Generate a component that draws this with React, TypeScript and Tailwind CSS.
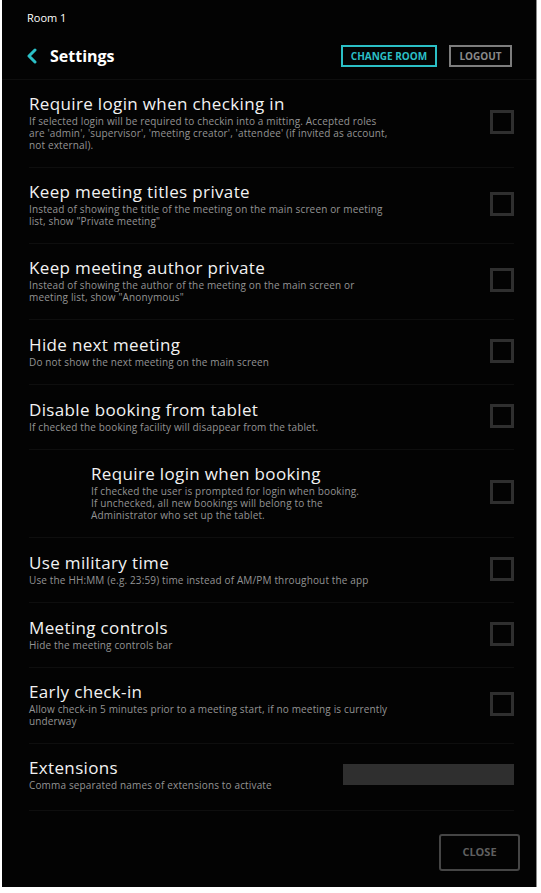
import React from "react";

type Setting = {
  title: string;
  lines: string[];
  indent?: boolean;
};

const settings: Setting[] = [
  {
    title: "Require login when checking in",
    lines: [
      "If selected login will be required to checkin into a mitting. Accepted roles",
      "are 'admin', 'supervisor', 'meeting creator', 'attendee' (if invited as account,",
      "not external).",
    ],
  },
  {
    title: "Keep meeting titles private",
    lines: [
      "Instead of showing the title of the meeting on the main screen or meeting",
      'list, show "Private meeting"',
    ],
  },
  {
    title: "Keep meeting author private",
    lines: [
      "Instead of showing the author of the meeting on the main screen or",
      'meeting list, show "Anonymous"',
    ],
  },
  {
    title: "Hide next meeting",
    lines: ["Do not show the next meeting on the main screen"],
  },
  {
    title: "Disable booking from tablet",
    lines: ["If checked the booking facility will disappear from the tablet."],
  },
  {
    title: "Require login when booking",
    indent: true,
    lines: [
      "If checked the user is prompted for login when booking.",
      "If unchecked, all new bookings will belong to the",
      "Administrator who set up the tablet.",
    ],
  },
  {
    title: "Use military time",
    lines: ["Use the HH:MM (e.g. 23:59) time instead of AM/PM throughout the app"],
  },
  {
    title: "Meeting controls",
    lines: ["Hide the meeting controls bar"],
  },
  {
    title: "Early check-in",
    lines: [
      "Allow check-in 5 minutes prior to a meeting start, if no meeting is currently",
      "underway",
    ],
  },
];

function SettingRow({ s }: { s: Setting }) {
  return (
    <div className="min-h-[65px] flex items-center justify-between pt-[13px] pb-[16px] border-b border-[#0e0e0e]">
      <div className={s.indent ? "pl-[62px]" : ""}>
        <div className="text-[17px] leading-[22px] tracking-[0.35px] text-[#f2f2f2]">{s.title}</div>
        <p className="text-[10px] leading-[12px] tracking-[0.15px] text-[#949494] whitespace-nowrap">
          {s.lines.map((l, i) => (
            <React.Fragment key={i}>
              {i > 0 && <br />}
              {l}
            </React.Fragment>
          ))}
        </p>
      </div>
      <div className="w-[24px] h-[24px] border-[3px] border-[#2f2f2f] shrink-0" />
    </div>
  );
}

export default function App() {
  return (
    <div className="min-h-screen bg-white" style={{ fontFamily: "'Open Sans', 'Liberation Sans', sans-serif" }}>
      <div className="ml-[2px] w-[535px] h-[887px] bg-[#030303] border-r border-[#8a8a8a] flex flex-col">
        {/* header */}
        <div className="px-[25px] pt-[11px] pb-[12px] border-b border-[#0e0e0e]">
          <div className="text-[11px] leading-[14px] text-white">Room 1</div>
          <div className="mt-[20px] h-[22px] flex items-center justify-between">
            <div className="flex items-center">
              <svg width="12" height="16" viewBox="0 0 12 16" className="-ml-[1px]">
                <path d="M9 2 L3 8 L9 14" fill="none" stroke="#2bbfc6" strokeWidth="3" strokeLinecap="round" strokeLinejoin="round" />
              </svg>
              <span className="ml-[12px] text-[16px] font-bold text-white">Settings</span>
            </div>
            <div className="flex items-center gap-[12px] mr-[-1px]">
              <button className="h-[22px] w-[96px] border-2 border-[#2bbfc6] text-[#2bbfc6] text-[10px] font-bold">
                CHANGE ROOM
              </button>
              <button className="h-[22px] w-[63px] border-2 border-[#7d7d7d] text-[#8a8a8a] text-[10px] font-bold">
                LOGOUT
              </button>
            </div>
          </div>
        </div>

        {/* settings list */}
        <div className="pl-[27px] pr-[22px]">
          {settings.map((s) => (
            <SettingRow key={s.title} s={s} />
          ))}
          <div className="flex items-center justify-between pt-[13px] pb-[19px] border-b border-[#0e0e0e]">
            <div>
              <div className="text-[17px] leading-[22px] tracking-[0.35px] text-[#f2f2f2]">Extensions</div>
              <p className="text-[10px] leading-[12px] tracking-[0.15px] text-[#949494]">
                Comma separated names of extensions to activate
              </p>
            </div>
            <input className="w-[171px] h-[21px] bg-[#2f2f2f] outline-none" />
          </div>
        </div>

        {/* footer */}
        <div className="mt-auto flex justify-end pr-[16px] pb-[16px]">
          <button className="w-[81px] h-[37px] border-2 border-[#454545] rounded-[3px] text-[#5f5f5f] text-[11px] font-bold">
            CLOSE
          </button>
        </div>
      </div>
    </div>
  );
}
